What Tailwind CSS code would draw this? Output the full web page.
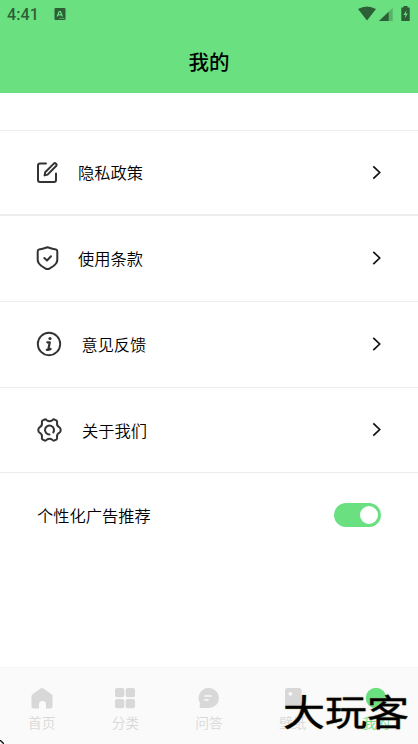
<!DOCTYPE html>
<html lang="zh-CN">
<head>
<meta charset="utf-8">
<title>我的</title>
<script src="https://cdn.jsdelivr.net/npm/@tailwindcss/browser@4"></script>
</head>
<body class="bg-white">
<div class="relative flex h-[744px] w-[418px] flex-col overflow-hidden bg-white font-['Noto_Sans_CJK_SC',sans-serif] text-black">
  <header class="h-[93px] shrink-0 bg-[#6ae080]">
    <div class="flex h-7 items-center pl-[7px] pr-[7px] text-[#2d5f37]">
      <span class="w-[47px] pt-px font-['Roboto',sans-serif] text-[16px] leading-7 font-medium tracking-[0.1px]">4:41</span>
      <svg class="size-3" viewBox="0 0 12 12"><rect x="0.5" width="11" height="12" rx="1" fill="currentColor"/><path d="M3.2 8.5 5.2 3.5h1.2l2 5M4 6.8h3.5" fill="none" stroke="#6ae080" stroke-width="1.2"/><path d="M5.5 10.4h5" stroke="#6ae080" stroke-width=".9" stroke-dasharray="1.2 .6"/></svg>
      <svg class="ml-auto h-4 w-[54px]" viewBox="0 0 54 16"><path d="M1 3.1Q10 -2 19 3.1L10 14.5Z" fill="currentColor"/><path d="M35.7 2v13H22Z" fill="currentColor" opacity=".35"/><path d="M31.7 5.8V15H22Z" fill="currentColor"/><path d="M46.5 0h4v1.5h2.2V15h-8.400V1.500h2.200Z" fill="currentColor"/><path d="M49.600 4 46.500 8.900h2l-.7 3.500 3-5h-2Z" fill="#6ae080"/></svg>
    </div>
    <h1 class="h-[65px] text-center text-[20.5px] leading-[66px] font-medium">我的</h1>
  </header>
  <main class="flex-1">
    <div class="h-[38px] border-b border-[#ececec]"></div>
    <a class="flex h-[85px] items-center border-b-2 border-[#ededed] pr-[36px] pl-[36px]">
      <svg class="size-[24px]" viewBox="0 0 24 24" fill="none" stroke="#333" stroke-width="2" stroke-linecap="round" stroke-linejoin="round"><path d="M10 2.500H4Q2 2.500 2 4.500V19Q2 21 4 21H18Q20 21 20 19V12.500"/><path d="m9.200 11.200 8.600-8.600q1-1 2.200.1t.1 2.300l-8.500 8.600-3 .8Z"/></svg>
      <span class="ml-[18px] pb-0.5 text-[16.250px] leading-6 font-[350]">隐私政策</span>
      <svg class="ml-auto h-4 w-[10px]" viewBox="0 0 10 16" fill="none" stroke="#111" stroke-width="1.700"><path d="m1.300 1.300 6.400 6.200-6.400 6.200"/></svg>
    </a>
    <a class="flex h-[86px] items-center border-b border-[#ececec] pr-[36px] pb-px pl-[36px]">
      <svg class="size-[24px]" viewBox="0 0 24 24" fill="none" stroke="#333" stroke-width="2" stroke-linecap="round" stroke-linejoin="round"><path d="M11.500 1.200Q17 3.100 20 3.500 21.300 3.800 21.300 5.200V14Q21.300 17 17.500 20L13 22.800Q11.500 23.400 10 22.800L5.500 20Q1.700 17 1.700 14V5.200Q1.700 3.800 3 3.500 6 3.100 11.500 1.200Z"/><path d="m8.300 12 2.700 2.500 4-4.300"/></svg>
      <span class="ml-[18px] pb-px text-[16.250px] leading-6 font-[350]">使用条款</span>
      <svg class="ml-auto h-4 w-[10px]" viewBox="0 0 10 16" fill="none" stroke="#111" stroke-width="1.700"><path d="m1.300 1.800 6.400 6.200-6.400 6.200"/></svg>
    </a>
    <a class="flex h-[86px] items-center border-b border-[#ececec] pr-[36px] pb-[2px] pl-[36px]">
      <svg class="size-[26px]" viewBox="0 0 26 26" fill="none" stroke="#333" stroke-width="1.900" stroke-linecap="round" stroke-linejoin="round"><circle cx="13" cy="13" r="11.200"/><circle cx="14" cy="7.500" r="1.600" fill="#333" stroke="none"/><path stroke-width="2.200" d="M11.300 11.300h2.500l-1.500 7.200q1 .6 2.300-.6M10.800 18.800h1.500"/></svg>
      <span class="ml-[19.500px] text-[16.200px] leading-6 font-[350]">意见反馈</span>
      <svg class="ml-auto h-4 w-[10px]" viewBox="0 0 10 16" fill="none" stroke="#111" stroke-width="1.700"><path d="m1.300 1.800 6.400 6.200-6.400 6.200"/></svg>
    </a>
    <a class="flex h-[85px] items-center border-b border-[#ececec] pr-[36px] pl-[36px]">
      <svg class="size-[26px]" viewBox="0 0 26 26" fill="none" stroke="#333" stroke-width="2" stroke-linecap="round" stroke-linejoin="round"><path d="M9 2.300Q10 2.300 10.700 3.300 13.500 5.300 16.300 3.300 17 2.300 18 2.300L20.700 3.700Q21.500 4.500 21 6 20.700 9 23.500 10.300 24.700 11 24.700 13T23.500 15.700Q20.700 17 21 20 21.500 21.500 20.700 22.300L18 23.700Q17 23.700 16.300 22.700 13.500 20.700 10.700 22.700 10 23.700 9 23.700L6.300 22.300Q5.500 21.500 6 20 6.300 17 3.500 15.700 2.300 15 2.300 13T3.500 10.300Q6.300 9 6 6 5.500 4.500 6.300 3.700Z"/><path d="M13.500 17.500A4.500 4.500 0 1 1 17.300 15.400"/></svg>
      <span class="ml-[20px] pb-px text-[16.250px] leading-6 font-[350]">关于我们</span>
      <svg class="ml-auto h-4 w-[10px]" viewBox="0 0 10 16" fill="none" stroke="#111" stroke-width="1.700"><path d="m1.300 1.300 6.400 6.200-6.400 6.200"/></svg>
    </a>
    <div class="flex h-[84px] items-center justify-between pr-[37px] pl-[37px]">
      <span class="pb-px text-[16.250px] leading-6 font-[350]">个性化广告推荐</span>
      <span class="flex h-6 w-[47px] items-center justify-end rounded-full bg-[#6ae080] pr-[3px]"><span class="size-[18px] rounded-full bg-white"></span></span>
    </div>
  </main>
  <nav class="grid h-[77px] shrink-0 grid-cols-5 border-t border-[#f5f5f5] bg-[#fafafa] text-[#d8d8d8]">
    <div class="flex flex-col items-center pt-[19px]">
      <svg class="size-[22px]" viewBox="0 0 22 22" fill="currentColor"><path d="M9.600 1.400q1.400-1 2.800 0L20.500 7.300q1 .7 1 2V19.500q0 2-2 2H15V17.500q0-3.500-3.500-3.500T8 17.500v4H2.500q-2 0-2-2V9.300q0-1.300 1-2Z"/></svg>
      <span class="mt-[3px] text-[13.700px] leading-5 font-[350]">首页</span>
    </div>
    <div class="flex flex-col items-center pt-[19px]">
      <svg class="size-[22px]" viewBox="0 0 22 22" fill="currentColor"><rect x="1" y="1" width="9.300" height="9.300" rx="2"/><rect x="11.700" y="1" width="9.300" height="9.300" rx="2"/><rect x="1" y="12" width="9.300" height="9.300" rx="2"/><rect x="11.700" y="12" width="9.300" height="9.300" rx="2"/></svg>
      <span class="mt-[3px] text-[13.700px] leading-5 font-[350]">分类</span>
    </div>
    <div class="flex flex-col items-center pt-[19px]">
      <svg class="size-[22px]" viewBox="0 0 22 22"><path d="M11 1a10 10 0 1 1 0 20H3q-1.500 0-1.500-1.500L2 16A10 10 0 0 1 11 1Z" fill="currentColor"/><path d="M7 9h6M7 13h3" stroke="#fafafa" stroke-width="1.700" stroke-linecap="round"/></svg>
      <span class="mt-[3px] text-[13.700px] leading-5 font-[350]">问答</span>
    </div>
    <div class="flex flex-col items-center pt-[19px]">
      <svg class="size-[22px]" viewBox="0 0 22 22"><rect x="3" y="1" width="16.500" height="21" rx="2.500" fill="currentColor"/><circle cx="8.300" cy="6.800" r="1.900" fill="#fafafa"/></svg>
      <span class="mt-[3px] text-[13.700px] leading-5 font-[350]">壁纸</span>
    </div>
    <div class="flex flex-col items-center pt-[19px] text-[#6ae080]">
      <svg class="size-[22px]" viewBox="0 0 22 22" fill="currentColor"><circle cx="11" cy="11" r="10.300"/></svg>
      <span class="mt-[3px] text-[13.700px] leading-5 font-[350]">我的</span>
    </div>
  </nav>
  <div class="absolute top-[692px] left-[283px] origin-top-left scale-y-[0.870] text-[42px] leading-[42px] font-normal whitespace-nowrap text-black [-webkit-text-stroke:0.4px_black] [text-shadow:0_0_2px_#b5ab84]">大玩客</div>
  <svg class="absolute bottom-0 left-0 size-1" viewBox="0 0 4 4"><path d="M0 0 4 4" stroke="#111" stroke-width="1.300"/></svg>
</div>
</body>
</html>
